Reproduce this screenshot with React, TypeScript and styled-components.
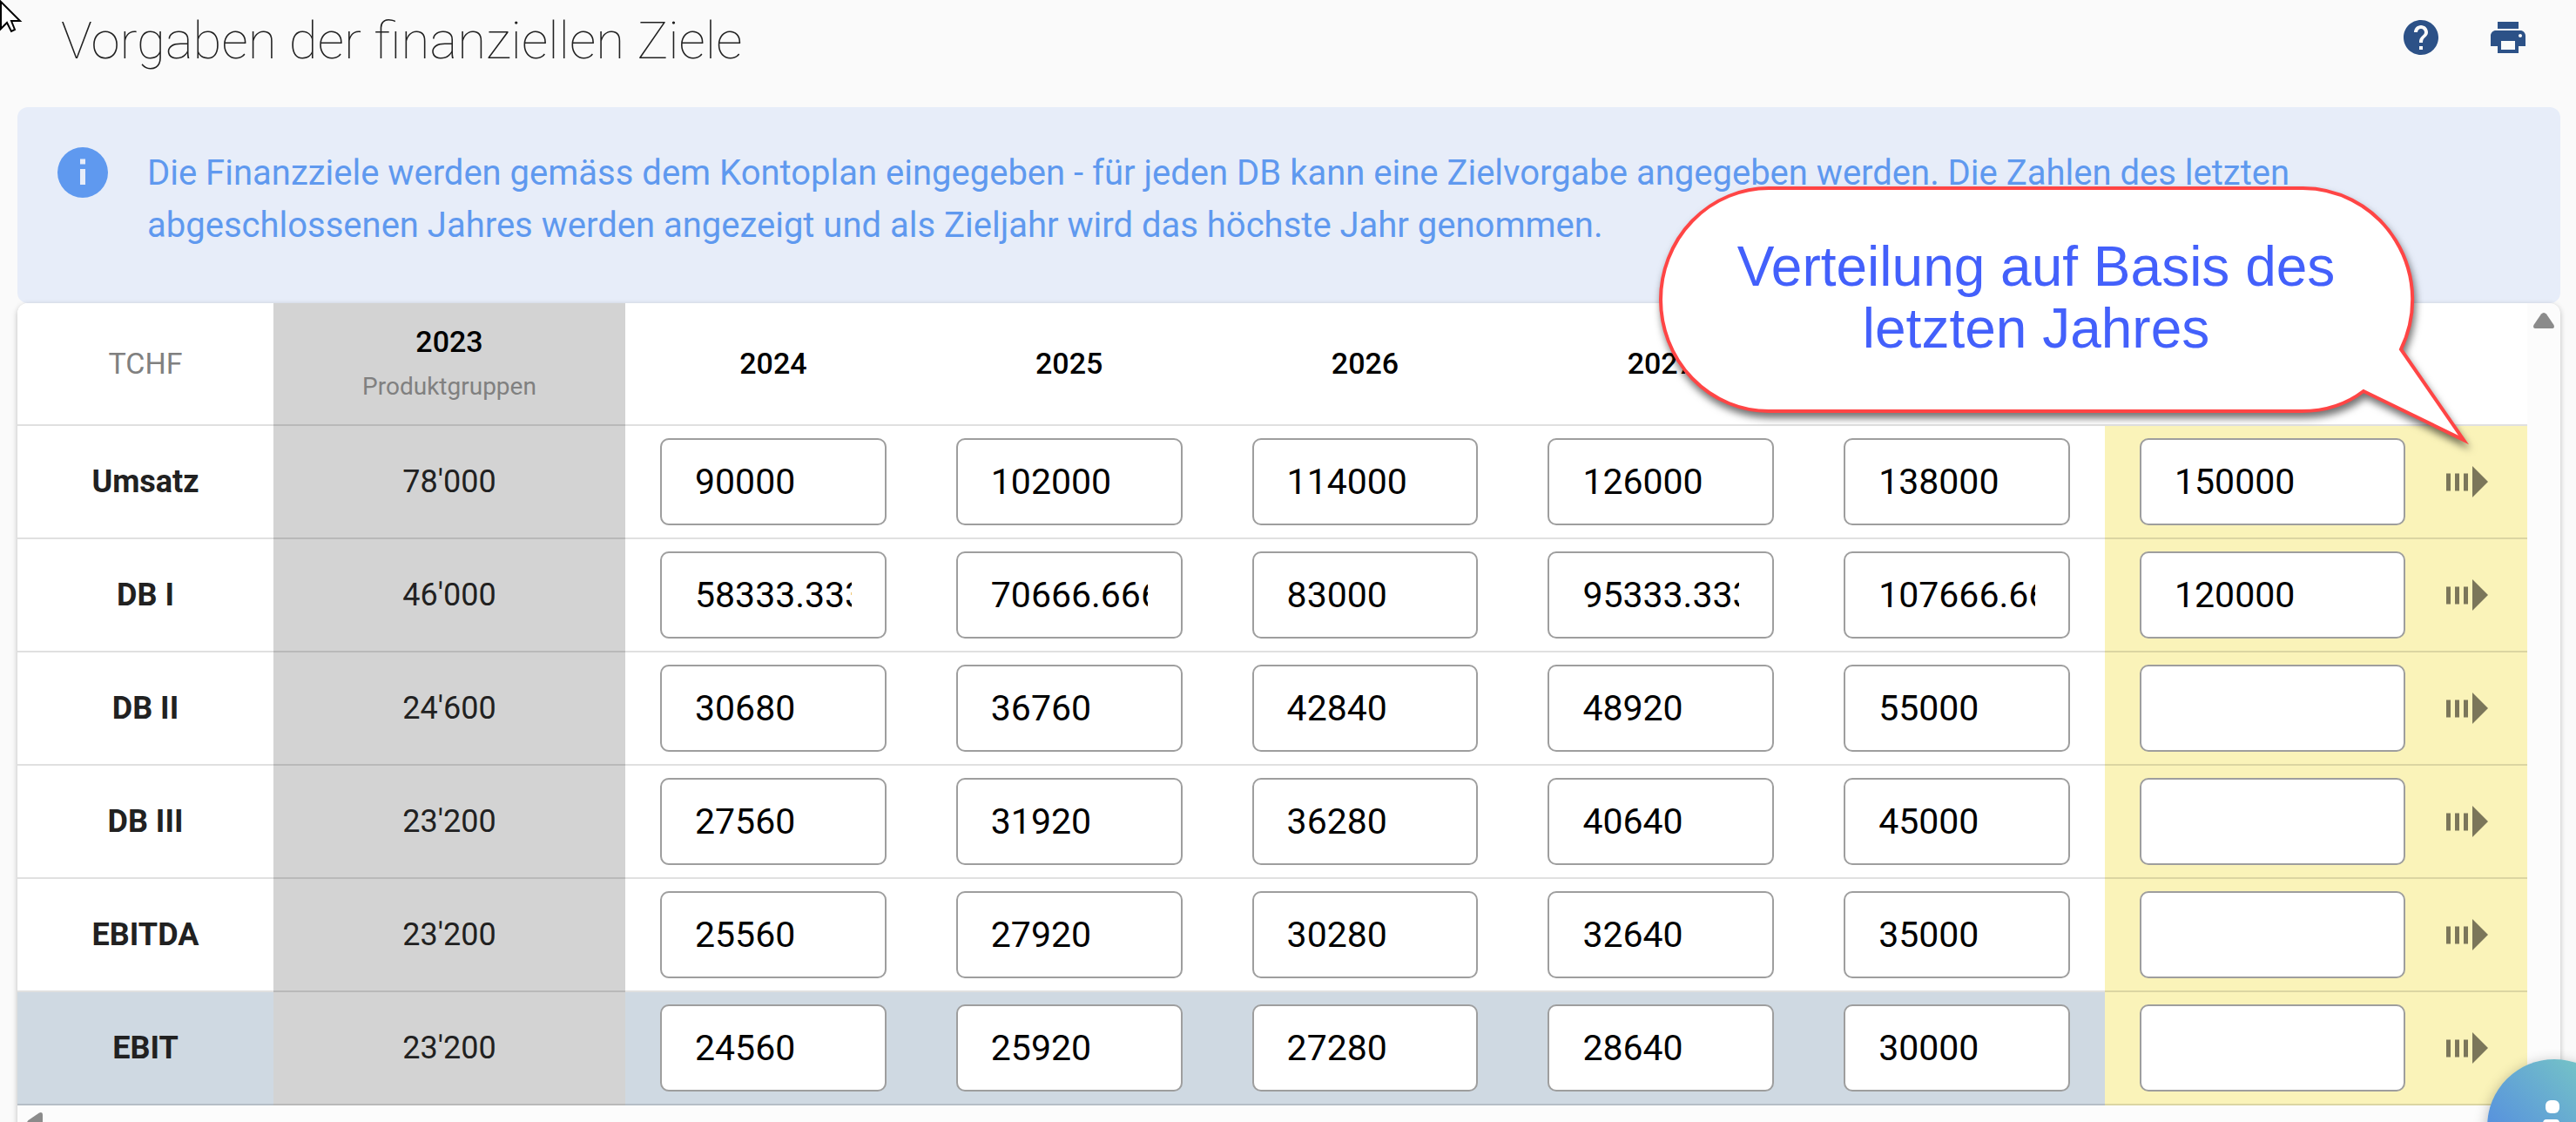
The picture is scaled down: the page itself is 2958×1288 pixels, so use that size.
import React, { useState } from "react";
import styled, { createGlobalStyle } from "styled-components";

const GlobalStyle = createGlobalStyle`
  *, *::before, *::after { box-sizing: border-box; }
  html, body { margin: 0; height: 100%; }
  body {
    overflow: hidden;
    background: #fafafa;
    color: #212121;
    font-family: Roboto, "Liberation Sans", sans-serif;
  }
`;

const Page = styled.div`
  padding: 0 18px 0 20px;
`;

const TitleBar = styled.header`
  display: flex;
  align-items: flex-start;
  justify-content: space-between;
  height: 123px;
  padding: 12px 36px 0 50px;
`;

const Title = styled.h1`
  margin: 0;
  font-size: 60px;
  line-height: 70px;
  font-weight: 100;
`;

const Actions = styled.div`
  display: flex;
  gap: 52px;
  padding-top: 7px;
`;

const ActionButton = styled.button`
  display: flex;
  padding: 0;
  border: 0;
  background: none;
  color: #2c5187;
  cursor: pointer;

  svg {
    width: 48px;
    height: 48px;
    fill: currentColor;
  }
`;

const Notice = styled.section`
  display: flex;
  gap: 39px;
  height: 225px;
  padding: 46px 280px 0 40px;
  border-radius: 12px;
  background: #e7edf9;
  color: #5f99ef;

  svg {
    flex: none;
    width: 70px;
    height: 60px;
    fill: currentColor;
  }
`;

const NoticeText = styled.p`
  margin: 0;
  font-size: 40px;
  line-height: 60px;
`;

const Card = styled.section`
  display: grid;
  grid-template-columns: minmax(0, 1fr) 38px;
  overflow: hidden;
  border-radius: 12px 12px 0 0;
  background: #fcfcfc;
  box-shadow: 0 2px 6px rgba(0, 0, 0, 0.25);
`;

const Table = styled.table`
  width: 100%;
  table-layout: fixed;
  border-collapse: separate;
  border-spacing: 0;
  background: #ffffff;
`;

type Tone = "plain" | "past" | "target" | "result";

const tones: Record<Tone, string> = {
  plain: "#ffffff",
  past: "#d3d3d3",
  target: "#faf3b9",
  result: "#cfd9e2",
};

const Column = styled.col<{ $width?: string }>`
  width: ${(p) => p.$width ?? "auto"};
`;

const HeadCell = styled.th<{ $tone?: Tone }>`
  height: 141px;
  padding: 0 0 2px;
  border-bottom: 2px solid rgba(0, 0, 0, 0.12);
  background: ${(p) => tones[p.$tone ?? "plain"]};
  color: #000000;
  font-size: 34px;
  line-height: 40px;
  font-weight: 500;
`;

const Unit = styled.span`
  color: #808080;
  font-weight: 400;
`;

const SubHead = styled.div`
  margin-top: 14px;
  color: #808080;
  font-size: 28px;
  line-height: 36px;
  font-weight: 400;
`;

const RowLabel = styled.th<{ $tone: Tone }>`
  height: 130px;
  padding: 0;
  border-bottom: 2px solid rgba(0, 0, 0, 0.12);
  background: ${(p) => tones[p.$tone]};
  font-size: 36px;
  font-weight: 700;
`;

const Cell = styled.td<{ $tone: Tone }>`
  height: 130px;
  padding: 0 40px;
  border-bottom: 2px solid rgba(0, 0, 0, 0.12);
  background: ${(p) => tones[p.$tone]};
  font-size: 36px;
  text-align: center;
`;

const Field = styled.input`
  display: block;
  width: 100%;
  height: 100px;
  padding: 0 38px;
  border: 2px solid #9e9e9e;
  border-radius: 10px;
  outline: 0;
  background: #ffffff;
  color: #000000;
  font: 400 41px Roboto, "Liberation Sans", sans-serif;
`;

const Target = styled.div`
  display: grid;
  grid-template-columns: minmax(0, 1fr) 54px;
  align-items: center;
  gap: 46px;
`;

const SpreadButton = styled.button`
  display: flex;
  padding: 0;
  border: 0;
  background: none;
  color: #7b765a;
  cursor: pointer;

  svg {
    width: 50px;
    height: 36px;
    fill: currentColor;
  }
`;

const ScrollTrack = styled.div`
  display: flex;
  justify-content: center;
  padding-top: 11px;

  svg {
    width: 24px;
    height: 18px;
    fill: #8b8b8b;
  }
`;

const ScrollFoot = styled.div`
  grid-column: 1 / -1;
  height: 38px;
  padding: 8px 11px;

  svg {
    display: block;
    width: 18px;
    height: 24px;
    fill: #8b8b8b;
  }
`;

const Callout = styled.aside`
  position: absolute;
  top: 204px;
  right: 100px;
  width: 960px;
  height: 320px;

  svg {
    position: absolute;
    inset: 0;
    width: 100%;
    height: 100%;
    overflow: visible;
    filter: drop-shadow(2px 6px 4px rgba(0, 0, 0, 0.55));
  }
`;

const CalloutText = styled.p`
  position: relative;
  width: 880px;
  margin: 0;
  padding-top: 67px;
  color: #4360fb;
  font-family: "Liberation Sans", Arial, sans-serif;
  font-size: 64px;
  line-height: 71px;
  text-align: center;
`;

const ChatButton = styled.button`
  position: fixed;
  right: -52px;
  bottom: -82px;
  width: 154px;
  height: 154px;
  padding: 0;
  border: 0;
  border-radius: 50%;
  background: linear-gradient(45deg, #4f84e4 10%, #78c8c4 90%);
  box-shadow: 0 4px 16px rgba(0, 0, 0, 0.3);
  cursor: pointer;

  svg {
    display: block;
    width: 154px;
    height: 154px;
    fill: #ffffff;
  }
`;

const Pointer = styled.svg`
  position: absolute;
  top: 0;
  left: 0;
  width: 26px;
  height: 38px;
`;

const years = ["2024", "2025", "2026", "2027", "2028"];

const rows = [
  { label: "Umsatz", past: "78'000", values: ["90000", "102000", "114000", "126000", "138000"], target: "150000" },
  {
    label: "DB I",
    past: "46'000",
    values: ["58333.333333", "70666.666667", "83000", "95333.333333", "107666.666667"],
    target: "120000",
  },
  { label: "DB II", past: "24'600", values: ["30680", "36760", "42840", "48920", "55000"], target: "" },
  { label: "DB III", past: "23'200", values: ["27560", "31920", "36280", "40640", "45000"], target: "" },
  { label: "EBITDA", past: "23'200", values: ["25560", "27920", "30280", "32640", "35000"], target: "" },
  { label: "EBIT", past: "23'200", values: ["24560", "25920", "27280", "28640", "30000"], target: "", result: true },
];

function NumberField({ initial, label }: { initial: string; label: string }) {
  const [value, setValue] = useState(initial);
  return <Field aria-label={label} inputMode="decimal" value={value} onChange={(e) => setValue(e.target.value)} />;
}

export default function App() {
  return (
    <>
      <GlobalStyle />
      <Page>
        <TitleBar>
          <Title>Vorgaben der finanziellen Ziele</Title>
          <Actions>
            <ActionButton aria-label="Hilfe">
              <svg viewBox="0 0 24 24">
                <path d="M12 2C6.48 2 2 6.48 2 12s4.480 10 10 10 10-4.480 10-10S17.520 2 12 2zm1 17h-2v-2h2v2zm2.070-7.750l-.9.920C13.450 12.900 13 13.500 13 15h-2v-.5c0-1.100.450-2.100 1.170-2.830l1.240-1.260c.370-.360.590-.860.590-1.410 0-1.100-.9-2-2-2s-2 .9-2 2H8c0-2.210 1.790-4 4-4s4 1.790 4 4c0 .880-.360 1.680-.930 2.250z" />
              </svg>
            </ActionButton>
            <ActionButton aria-label="Drucken">
              <svg viewBox="0 0 24 24">
                <path d="M19 8H5c-1.660 0-3 1.340-3 3v6h4v4h12v-4h4v-6c0-1.660-1.340-3-3-3zm-3 11H8v-5h8v5zm3-7c-.550 0-1-.450-1-1s.450-1 1-1 1 .450 1 1-.450 1-1 1zm-1-9H6v4h12V3z" />
              </svg>
            </ActionButton>
          </Actions>
        </TitleBar>

        <Notice>
          <svg viewBox="0 0 70 60" aria-hidden="true">
            <path fillRule="evenodd" d="M35 0a29 29 0 1 0 0 58 29 29 0 0 0 0-58zm-3 13.500h6v6h-6zm0 11.500h6v18h-6z" />
          </svg>
          <NoticeText>
            Die Finanzziele werden gemäss dem Kontoplan eingegeben - für jeden DB kann eine Zielvorgabe angegeben
            werden. Die Zahlen des letzten abgeschlossenen Jahres werden angezeigt und als Zieljahr wird das höchste
            Jahr genommen.
          </NoticeText>
        </Notice>

        <Card>
          <Table>
            <colgroup>
              <Column $width="294px" />
              <Column $width="404px" />
              {years.map((y) => (
                <Column key={y} />
              ))}
              <Column $width="485px" />
            </colgroup>
            <thead>
              <tr>
                <HeadCell scope="col">
                  <Unit>TCHF</Unit>
                </HeadCell>
                <HeadCell scope="col" $tone="past">
                  2023
                  <SubHead>Produktgruppen</SubHead>
                </HeadCell>
                {years.map((y) => (
                  <HeadCell key={y} scope="col">
                    {y}
                  </HeadCell>
                ))}
                <HeadCell scope="col" />
              </tr>
            </thead>
            <tbody>
              {rows.map((row) => {
                const tone: Tone = row.result ? "result" : "plain";
                return (
                  <tr key={row.label}>
                    <RowLabel scope="row" $tone={tone}>
                      {row.label}
                    </RowLabel>
                    <Cell $tone="past">{row.past}</Cell>
                    {row.values.map((value, i) => (
                      <Cell key={years[i]} $tone={tone}>
                        <NumberField initial={value} label={`${row.label} ${years[i]}`} />
                      </Cell>
                    ))}
                    <Cell $tone="target">
                      <Target>
                        <NumberField initial={row.target} label={`${row.label} Ziel`} />
                        <SpreadButton aria-label={`${row.label} verteilen`}>
                          <svg viewBox="0 0 50 36">
                            <path d="M1 8.500h5v20h-5zM11 8.500h5v20h-5zM21 8.500h5v20h-5zM31 0l18 18-18 18z" />
                          </svg>
                        </SpreadButton>
                      </Target>
                    </Cell>
                  </tr>
                );
              })}
            </tbody>
          </Table>
          <ScrollTrack>
            <svg viewBox="0 0 24 18" aria-hidden="true">
              <path d="M9 1.500Q12-1.500 15 1.500L23.500 14Q25 18 21 18H3Q-1 18 .5 14z" />
            </svg>
          </ScrollTrack>
          <ScrollFoot>
            <svg viewBox="0 0 18 24" aria-hidden="true">
              <path d="M1.500 9Q-1.500 12 1.500 15L14 23.500Q18 25 18 21V3Q18-1 14 .5z" />
            </svg>
          </ScrollFoot>
        </Card>
      </Page>

      <Callout>
        <svg viewBox="0 0 960 320" aria-hidden="true">
          <path
            d="M133 12H745A126 128 0 0 1 859 197L931 301L816 245Q786 268 745 268H133A124 128 0 0 1 9 140A124 128 0 0 1 133 12z"
            fill="#ffffff"
            stroke="#ff4545"
            strokeWidth="4"
          />
        </svg>
        <CalloutText>
          Verteilung auf Basis des
          <br />
          letzten Jahres
        </CalloutText>
      </Callout>

      <ChatButton aria-label="Information">
        <svg viewBox="0 0 154 154" aria-hidden="true">
          <rect x="67" y="47" width="16" height="15" rx="6" />
          <path d="M68 69h11q4 0 4 4v40h-13V81q-6-2-6-7t4-5z" />
        </svg>
      </ChatButton>

      <Pointer viewBox="0 0 26 38" aria-hidden="true">
        <path d="M1 2L23 24H13L17 34L13 36L8 26L1 33z" fill="#ffffff" stroke="#000000" strokeWidth="2" />
      </Pointer>
    </>
  );
}
